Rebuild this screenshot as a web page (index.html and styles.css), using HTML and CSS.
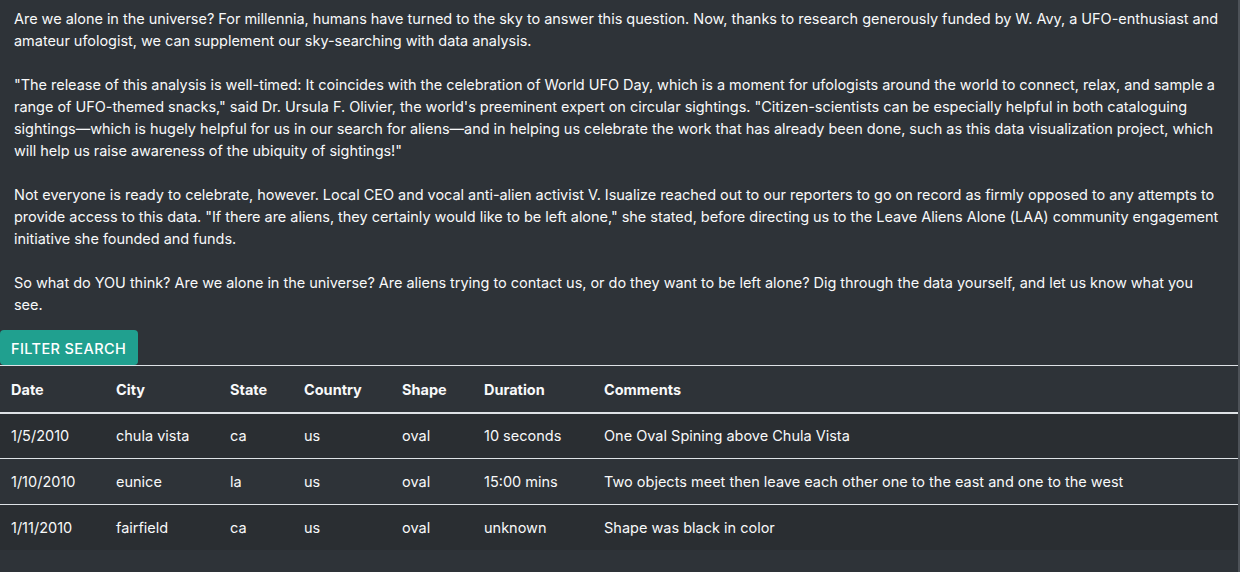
FILE: index.html
```html
<!DOCTYPE html>
<html lang="en">
<head>
<meta charset="utf-8">
<title>UFO Sightings</title>
<link rel="stylesheet" href="styles.css">
</head>
<body>
<div class="page">
  <div class="intro">
    <p>Are we alone in the universe? For millennia, humans have turned to the sky to answer this question. Now, thanks to research generously funded by W. Avy, a UFO-enthusiast and amateur ufologist, we can supplement our sky-searching with data analysis.</p>
    <p>"The release of this analysis is well-timed: It coincides with the celebration of World UFO Day, which is a moment for ufologists around the world to connect, relax, and sample a range of UFO-themed snacks," said Dr. Ursula F. Olivier, the world's preeminent expert on circular sightings. "Citizen-scientists can be especially helpful in both cataloguing sightings—which is hugely helpful for us in our search for aliens—and in helping us celebrate the work that has already been done, such as this data visualization project, which will help us raise awareness of the ubiquity of sightings!"</p>
    <p>Not everyone is ready to celebrate, however. Local CEO and vocal anti-alien activist V. Isualize reached out to our reporters to go on record as firmly opposed to any attempts to provide access to this data. "If there are aliens, they certainly would like to be left alone," she stated, before directing us to the Leave Aliens Alone (LAA) community engagement initiative she founded and funds.</p>
    <p class="last">So what do YOU think? Are we alone in the universe? Are aliens trying to contact us, or do they want to be left alone? Dig through the data yourself, and let us know what you see.</p>
  </div>
  <button class="filter-btn" type="button">Filter Search</button>
  <table class="ufo-table">
    <thead>
      <tr>
        <th class="c-date">Date</th>
        <th class="c-city">City</th>
        <th class="c-state">State</th>
        <th class="c-country">Country</th>
        <th class="c-shape">Shape</th>
        <th class="c-duration">Duration</th>
        <th class="c-comments">Comments</th>
      </tr>
    </thead>
    <tbody>
      <tr>
        <td>1/5/2010</td><td>chula vista</td><td>ca</td><td>us</td><td>oval</td><td>10 seconds</td><td>One Oval Spining above Chula Vista</td>
      </tr>
      <tr>
        <td>1/10/2010</td><td>eunice</td><td>la</td><td>us</td><td>oval</td><td>15:00 mins</td><td>Two objects meet then leave each other one to the east and one to the west</td>
      </tr>
      <tr>
        <td>1/11/2010</td><td>fairfield</td><td>ca</td><td>us</td><td>oval</td><td>unknown</td><td>Shape was black in color</td>
      </tr>
    </tbody>
  </table>
</div>
</body>
</html>
```
FILE: styles.css
```css
html, body {
  margin: 0;
  padding: 0;
  background: #2e3338;
}
body {
  font-family: Inter, "Noto Sans", sans-serif;
  font-size: 14.5px;
  line-height: 22px;
  color: #f8f9fa;
}
.page {
  min-height: 572px;
  border-right: 2px solid #4d5258;
  box-sizing: border-box;
}
.intro {
  padding: 8px 16px 0 14px;
  letter-spacing: -0.035px;
}
.intro p {
  margin: 0 0 22px 0;
}
.intro p.last {
  margin-bottom: 14px;
}
.filter-btn {
  display: block;
  background: #20a08f;
  color: #ffffff;
  border: none;
  border-radius: 4px;
  font-family: Inter, "Noto Sans", sans-serif;
  font-size: 14.5px;
  font-weight: 500;
  letter-spacing: 0.4px;
  text-transform: uppercase;
  height: 35px;
  width: 138px;
  padding: 1px 0 0 11px;
  text-align: left;
  margin: 0;
}
.ufo-table {
  width: 100%;
  border-collapse: collapse;
  border-top: 1px solid #dee2e6;
}
.ufo-table th,
.ufo-table td {
  text-align: left;
  padding: 0 11px;
  height: 45px;
  vertical-align: middle;
  white-space: nowrap;
}
.ufo-table th {
  font-weight: 700;
  padding-top: 1px;
  border-bottom: 2px solid #dee2e6;
}
.ufo-table td {
  border-top: 1px solid #dee2e6;
}
.ufo-table tbody tr:first-child td {
  border-top: none;
  height: 44px;
}
.ufo-table tbody tr:nth-child(odd) {
  background: #2a2e32;
}
.c-date { width: 83px; }
.c-city { width: 92px; }
.c-state { width: 52px; }
.c-country { width: 76px; }
.c-shape { width: 60px; }
.c-duration { width: 98px; }
```
